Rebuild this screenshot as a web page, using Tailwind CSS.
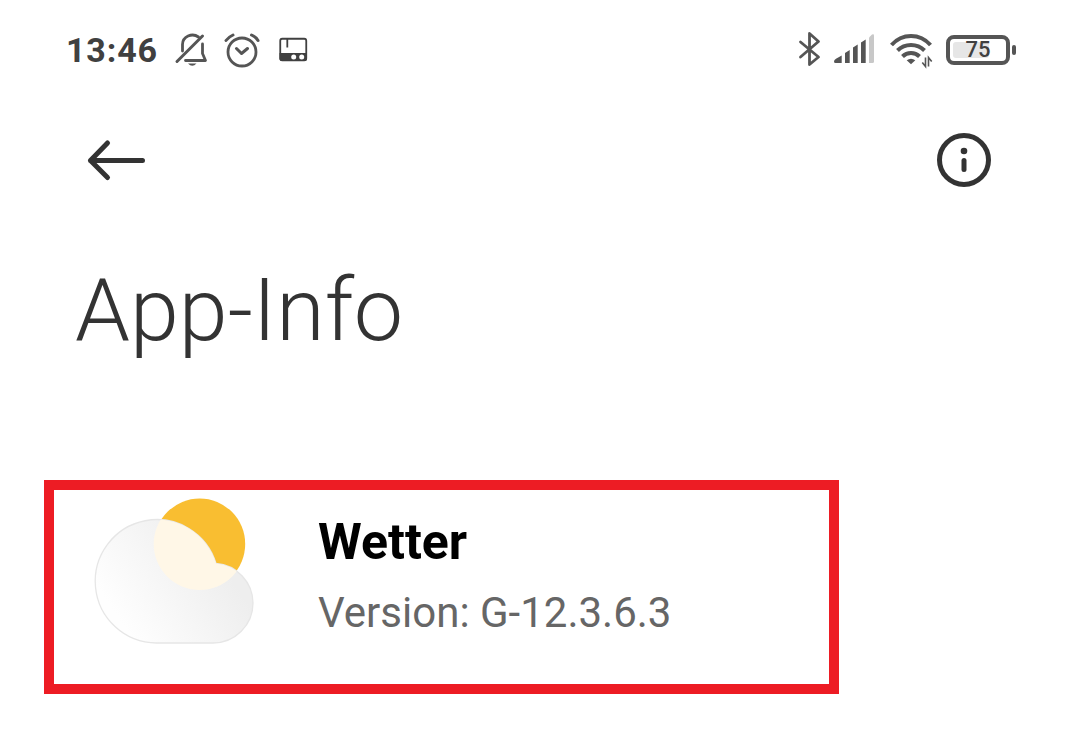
<!DOCTYPE html>
<html lang="de">
<head>
<meta charset="utf-8">
<meta name="viewport" content="width=device-width, initial-scale=1">
<title>App-Info</title>
<script src="https://cdn.jsdelivr.net/npm/@tailwindcss/browser@4"></script>
</head>
<body class="min-h-screen bg-white font-[Roboto,sans-serif] text-[#333333]">
<div class="flex items-center justify-between pt-7 pr-16 pl-[66px] text-[#555555]">
  <div class="flex h-11 items-center">
    <time class="text-[34px] leading-11 font-bold tracking-wide text-[#404040]">13:46</time>
    <svg class="ml-4 h-11 w-9" viewBox="170 28 36 44" fill="none" stroke="currentColor" stroke-width="3" stroke-linecap="round" stroke-linejoin="round" role="img" aria-label="Stumm">
      <path d="M178.500 51V44.500a10 9.500 0 0 1 16-7.500M198.500 44v9.500L201.500 60.500H181.500" stroke-width="2.800"/>
      <path d="M173 61.500 198.500 36"/>
      <path d="M184 63.500h8.500q-4.250 4.500-8.500 0z" fill="currentColor" stroke="none"/>
    </svg>
    <svg class="ml-3 h-11 w-10" viewBox="217 28 40 44" fill="none" stroke="currentColor" stroke-width="3" stroke-linecap="round" stroke-linejoin="round" role="img" aria-label="Wecker">
      <circle cx="237" cy="52" r="14" stroke-width="2.800"/>
      <path d="M231.500 48.500 236.500 53.500 242.500 48.500M221 40.500Q223.500 37 228 35M246.500 35Q251 37 253 40.500"/>
    </svg>
    <svg class="ml-4 h-11 w-8" viewBox="272 28 32 44" fill="none" role="img" aria-label="Radio">
      <rect x="274.250" y="38.750" width="26" height="21.500" rx="2" stroke="#404040" stroke-width="1.800"/>
      <path d="M273.500 53h27.500v5.500q0 2.500-2.500 2.500h-22.500q-2.500 0-2.500-2.500z" fill="#404040"/>
      <path d="M281.300 39v8.500" stroke="#404040" stroke-width="1.800"/>
      <circle cx="287.700" cy="57" r="2.500" fill="#fff"/><circle cx="295.700" cy="57" r="2.500" fill="#fff"/>
    </svg>
  </div>
  <div class="flex h-11 items-center">
    <svg class="h-11 w-6" viewBox="798 28 24 44" fill="none" stroke="currentColor" stroke-width="2.800" stroke-linecap="round" stroke-linejoin="round" role="img" aria-label="Bluetooth">
      <path d="M800.500 42 818.500 57 809.500 64.500V33.500L818.500 41.500 800.500 57"/>
    </svg>
    <svg class="ml-3 h-11 w-10" viewBox="834 28 40 44" fill="currentColor" role="img" aria-label="Mobilfunksignal">
      <path d="M834 61.500Q834 60 836 58.800L841.700 55.500V63H835.500Q834 63 834 61.500zM845 53 849.700 50V63H845zM853 47.500 857.700 44.500V63H853zM861 42.500 865.700 39.500V63H861z"/>
      <path d="M869 37.500 872 34.500Q874 33.500 874 35.500V61.500Q874 63 872.500 63H869z" fill="#c8c8c8"/>
    </svg>
    <svg class="ml-4 h-11 w-11" viewBox="890 28 44 44" fill="none" stroke="currentColor" stroke-width="4" role="img" aria-label="WLAN">
      <path d="M891.500 45Q899.500 36 911 36T930.500 45M897.500 50.500Q903 45 911 45T924.500 50.500M902.500 56.500Q906 53 911 53T919.500 56.500"/>
      <path d="M911 64.300 906.700 60.300Q911 57.200 915.300 60.300z" fill="currentColor" stroke="none"/>
      <path d="M925.500 57.500V66.500L922.300 62.500M928.500 66.500V57.500L931.700 61.500" stroke-width="1.600"/>
    </svg>
    <div class="ml-3 flex items-center gap-0.5" role="img" aria-label="Akku 75 Prozent">
      <div class="relative flex h-[30px] w-16 items-center justify-center rounded-lg border-4 border-[#555555]">
        <div class="absolute inset-y-[3px] left-[3px] w-9 rounded-[3px] bg-[#e6e6e6]"></div>
        <span class="relative text-[22px] leading-6 font-medium text-[#404040]">75</span>
      </div>
      <div class="h-2.5 w-1 rounded-sm bg-[#555555]"></div>
    </div>
  </div>
</div>

<header class="flex items-center justify-between pt-[60px] pr-[88px] pl-[86px]">
  <button type="button" aria-label="Zurück" class="block">
    <svg class="h-14 w-[60px]" viewBox="86 132 60 56" fill="none" stroke="currentColor" stroke-width="5" stroke-linecap="round" stroke-linejoin="round"><path d="M142.500 160.500H90.500M107.500 143 90.500 160.500 107.500 177.500"/></svg>
  </button>
  <button type="button" aria-label="Information" class="block">
    <svg class="h-14 w-14" viewBox="936 132 56 56" fill="none" stroke="currentColor" stroke-width="5" stroke-linecap="round"><circle cx="964" cy="160" r="24.500"/><path d="M964 160.500V169.500"/><circle cx="964" cy="151" r="3.300" fill="currentColor" stroke="none"/></svg>
  </button>
</header>

<main>
  <h1 class="mt-[70px] px-[75px] text-[88px] leading-[104px] font-light">App-Info</h1>
  <section class="mr-6 mt-[118px] ml-11 flex max-w-[795px] items-start border-10 border-[#ed1c24] pt-1 pb-9 pl-9">
    <svg class="h-[154px] w-[168px] shrink-0" viewBox="90 494 168 154" role="img" aria-label="Wetter-Symbol">
      <defs>
        <linearGradient id="cloud" gradientUnits="userSpaceOnUse" x1="120" y1="620" x2="215" y2="555"><stop offset="0" stop-color="#fefefe"/><stop offset="1" stop-color="#eeeeee"/></linearGradient>
        <clipPath id="cloudShape"><path d="M156.500 643A61.700 61.700 0 1 1 216 563.500A40 40 0 0 1 253 603A40 40 0 0 1 213 643z"/></clipPath>
      </defs>
      <circle cx="199.700" cy="544" r="45.500" fill="#f9be31"/>
      <path d="M156.500 643A61.700 61.700 0 1 1 216 563.500A40 40 0 0 1 253 603A40 40 0 0 1 213 643z" fill="url(#cloud)" stroke="#e6e6e6" stroke-width="1.300"/>
      <circle cx="199.700" cy="544" r="46" fill="#fff7e7" clip-path="url(#cloudShape)"/>
    </svg>
    <div class="ml-[60px] pt-[18px]">
      <h2 class="text-[50px] leading-[60px] font-bold text-black">Wetter</h2>
      <p class="mt-4 text-[42px] leading-[50px] text-[#666666]">Version: G-12.3.6.3</p>
    </div>
  </section>
</main>
</body>
</html>
